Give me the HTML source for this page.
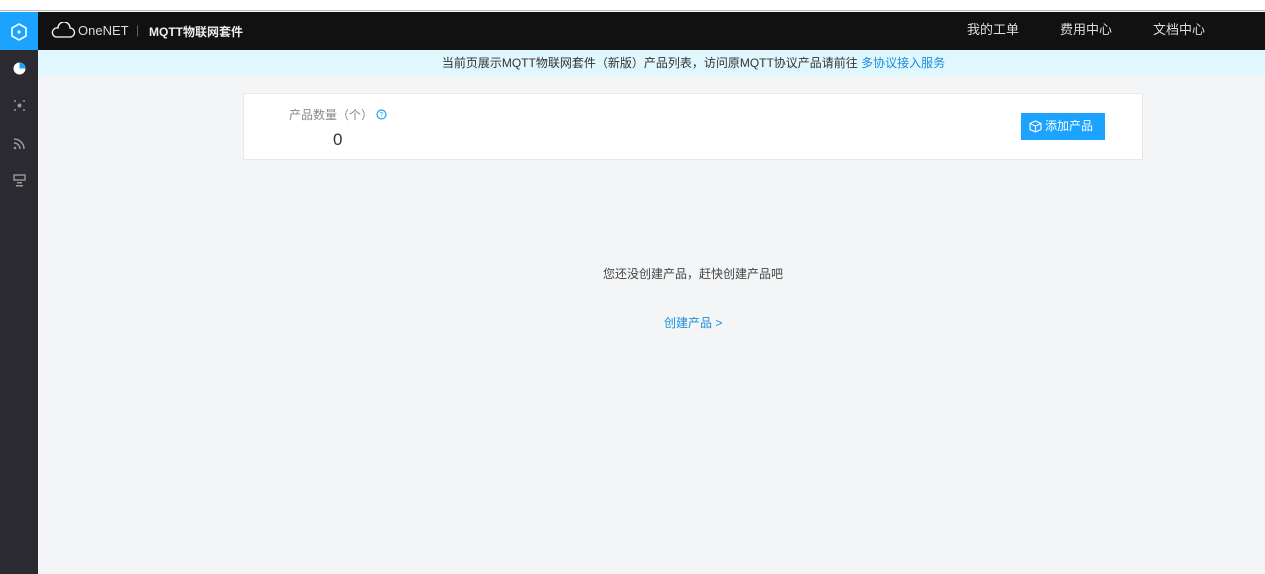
<!DOCTYPE html>
<html><head><meta charset="utf-8"><style>
*{margin:0;padding:0;box-sizing:border-box}
body{width:1265px;height:574px;overflow:hidden;background:#f4f5f7;font-family:"Liberation Sans","Noto Sans CJK SC",sans-serif;position:relative}
.top{position:absolute;left:0;top:0;width:1265px;height:11px;background:#fff;border-bottom:1px solid #bbb}
.hdr{position:absolute;left:0;top:12px;width:1265px;height:38px;background:#111}
.side{position:absolute;left:0;top:12px;width:38px;height:562px;background:#2a2a30}
.act{position:absolute;left:0;top:12px;width:38px;height:38px;background:#1ca3ff}
.ban{position:absolute;left:38px;top:50px;width:1227px;height:26px;background:#e1f7fe;text-align:center;font-size:12px;line-height:26px;color:#333;padding-left:84px}
.t{position:absolute;font-size:12px;color:#ddd}
.card{position:absolute;left:243px;top:93px;width:900px;height:67px;background:#fff;border:1px solid #e8e8e8}
.btn{position:absolute;left:1021px;top:113px;width:84px;height:27px;background:#1ca3ff;color:#fff;font-size:12px;line-height:27px;padding-left:24px}
</style></head><body>
<div class="top"></div>
<div class="hdr"></div>
<div class="side"></div>
<div class="act"></div>
<svg style="position:absolute;left:9px;top:22px" width="20" height="20" viewBox="0 0 20 20"><polygon points="10,2 17,6 17,14 10,18 3,14 3,6" fill="none" stroke="#fff" stroke-width="1.6"/><circle cx="10" cy="10" r="1.6" fill="#fff"/></svg>
<svg style="position:absolute;left:13px;top:62px" width="13" height="13" viewBox="0 0 13 13"><circle cx="6.5" cy="6.5" r="6" fill="#fff"/><path d="M6.5 6.5V0.5A6 6 0 0 1 12.5 6.5Z" fill="#1ca3ff"/></svg>
<svg style="position:absolute;left:13px;top:99px" width="13" height="13"><g fill="#999"><circle cx="2" cy="2" r="1"/><circle cx="11" cy="2" r="1"/><circle cx="2" cy="11" r="1"/><circle cx="11" cy="11" r="1"/><circle cx="6.5" cy="6.5" r="2"/></g></svg>
<svg style="position:absolute;left:13px;top:137px" width="13" height="13"><g fill="none" stroke="#999" stroke-width="1.5"><path d="M1 6a6 6 0 0 1 6 6"/><path d="M1 2a10 10 0 0 1 10 10"/></g><circle cx="2" cy="11" r="1.3" fill="#999"/></svg>
<svg style="position:absolute;left:13px;top:174px" width="13" height="13"><rect x="1" y="1" width="11" height="5" fill="none" stroke="#999" stroke-width="1.4"/><rect x="4" y="8" width="5" height="1.5" fill="#999"/><rect x="3" y="11" width="7" height="1.5" fill="#999"/></svg>
<svg style="position:absolute;left:50px;top:22px" width="26" height="16" viewBox="0 0 26 16"><path d="M6 15H20A4.5 4.5 0 0 0 20 6 6 6 0 0 0 8 6 4.5 4.5 0 0 0 6 15Z" fill="none" stroke="#fff" stroke-width="1.3"/></svg>
<div class="t" style="left:78px;top:23px;font-size:13px;color:#ddd">OneNET</div>
<div class="t" style="left:136px;top:23px;color:#666">|</div>
<div class="t" style="left:149px;top:23px;color:#eee;font-weight:bold;font-size:12px">MQTT物联网套件</div>
<div class="t" style="left:967px;top:19px;font-size:13px">我的工单</div>
<div class="t" style="left:1060px;top:19px;font-size:13px">费用中心</div>
<div class="t" style="left:1153px;top:19px;font-size:13px">文档中心</div>
<div class="ban">当前页展示MQTT物联网套件（新版）产品列表，访问原MQTT协议产品请前往 <span style="color:#1a8cde">多协议接入服务</span></div>
<div class="card"></div>
<div style="position:absolute;left:289px;top:106px;font-size:12px;color:#888">产品数量（个）</div>
<svg style="position:absolute;left:376px;top:109px" width="11" height="11"><circle cx="5.5" cy="5.5" r="4.5" fill="none" stroke="#1ca3ff" stroke-width="1.2"/><text x="5.5" y="8" font-size="7" text-anchor="middle" fill="#1ca3ff">?</text></svg>
<div style="position:absolute;left:333px;top:130px;font-size:17px;color:#333">0</div>
<div class="btn">添加产品</div>
<svg style="position:absolute;left:1029px;top:120px" width="13" height="13" viewBox="0 0 13 13"><path d="M6.5 1L12 3.5V9.5L6.5 12 1 9.5V3.5Z M1 3.5 6.5 6 12 3.5 M6.5 6V12" fill="none" stroke="#fff" stroke-width="1.1"/></svg>
<div style="position:absolute;left:0;width:1386px;top:265px;text-align:center;font-size:12px;color:#444;">您还没创建产品，赶快创建产品吧</div>
<div style="position:absolute;left:664px;top:314px;font-size:12px;color:#1a8cde">创建产品 &gt;</div>
</body></html>
